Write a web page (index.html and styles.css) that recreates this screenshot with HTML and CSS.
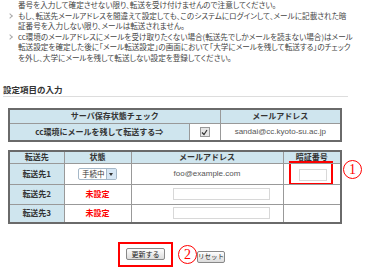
FILE: index.html
```html
<!DOCTYPE html>
<html lang="ja">
<head>
    <meta charset="UTF-8">
    <title>メール転送設定</title>
    <link rel="stylesheet" href="styles.css">
</head>
<body>
    <ul class="notes">
        <li class="cont">番号を入力して確定させない限り、転送を受け付けませんので注意してください。</li>
        <li>もし、転送先メールアドレスを間違えて設定しても、このシステムにログインして、メールに記載された暗<br>証番号を入力しない限り、メールは転送されません。</li>
        <li>cc環境のメールアドレスにメールを受け取りたくない場合(転送先でしかメールを読まない場合)はメール<br>転送設定を確定した後に「メール転送設定」の画面において「大学にメールを残して転送する」のチェック<br>を外し、大学にメールを残して転送しない設定を登録してください。</li>
    </ul>

    <h2 class="section-title">設定項目の入力</h2>

    <table class="grid server-table">
        <colgroup>
            <col class="w-label">
            <col class="w-check">
            <col class="w-mail">
        </colgroup>
        <tr class="head">
            <th colspan="2">サーバ保存状態チェック</th>
            <th>メールアドレス</th>
        </tr>
        <tr class="row-cc">
            <th class="label">cc環境にメールを残して転送する⇒</th>
            <td><span class="check"><svg width="7" height="7" viewBox="0 0 7 7"><path d="M1 3.5 L3 5.5 L6 1" fill="none" stroke="#333" stroke-width="1.2"/></svg></span></td>
            <td class="mail">sandai@cc.kyoto-su.ac.jp</td>
        </tr>
    </table>

    <div class="forward-wrap">
        <table class="grid forward-table">
            <colgroup>
                <col class="w-dest">
                <col class="w-state">
                <col class="w-addr">
                <col class="w-pin">
            </colgroup>
            <tr class="head">
                <th>転送先</th>
                <th>状態</th>
                <th>メールアドレス</th>
                <th>暗証番号</th>
            </tr>
            <tr class="r1">
                <th class="label">転送先1</th>
                <td><span class="select">手続中<span class="arrow"></span></span></td>
                <td class="mail">foo@example.com</td>
                <td class="pin-cell"><span class="mark-box"><span class="input pin"></span></span></td>
            </tr>
            <tr class="r2">
                <th class="label">転送先2</th>
                <td class="unset">未設定</td>
                <td><span class="input addr"></span></td>
                <td></td>
            </tr>
            <tr class="r3">
                <th class="label">転送先3</th>
                <td class="unset">未設定</td>
                <td><span class="input addr"></span></td>
                <td></td>
            </tr>
        </table>
        <span class="circle num1">1</span>
    </div>

    <div class="actions">
        <div class="mark-frame"><button class="btn">更新する</button></div>
        <span class="circle num2">2</span>
        <button class="btn reset">リセット</button>
    </div>
</body>
</html>
```

FILE: styles.css
```css
body {
    margin: 0;
    font-family: "Noto Sans CJK JP", sans-serif;
    font-size: 8px;
    color: #333;
    background-color: #fff;
}
.notes {
    list-style: none;
    margin: 0;
    padding: 0 0 0 18px;
    font-size: 7.6px;
    line-height: 10.5px;
    white-space: nowrap;
    font-feature-settings: "palt";
    color: #444;
}
.notes li {
    position: relative;
}
.notes li::before {
    content: "";
    position: absolute;
    left: -10px;
    top: 3px;
    width: 3px;
    height: 3px;
    border-top: 1px solid #aaa;
    border-right: 1px solid #aaa;
    transform: rotate(45deg);
}
.notes li.cont::before {
    display: none;
}
.section-title {
    margin: 20px 0 0 3px;
    width: 345px;
    font-size: 8.5px;
    line-height: 12px;
    padding-bottom: 1px;
    border-bottom: 1px solid #ddd;
    color: #333;
}
.grid {
    border-collapse: collapse;
    border: 2px solid #6a6a6a;
    margin-left: 8px;
    width: 332px;
    table-layout: fixed;
    flex: none;
}
.grid th,
.grid td {
    border: 1px solid #999;
    padding: 0;
    text-align: center;
    vertical-align: middle;
    font-size: 8px;
    line-height: 10px;
    white-space: nowrap;
}
.grid th {
    background-color: #cfe5ee;
    font-weight: bold;
    color: #333;
}
.server-table {
    margin-top: 11px;
}
.server-table .head {
    height: 14px;
}
.server-table .row-cc {
    height: 18px;
}
.w-label {
    width: 180px;
}
.w-check {
    width: 31px;
}
.w-mail {
    width: 121px;
}
.mail {
    font-family: "Liberation Sans", Arial, sans-serif;
    font-size: 7.5px;
    color: #555;
}
.check {
    display: inline-block;
    width: 8px;
    height: 8px;
    border: 1px solid #999;
    background-color: #e6e6e6;
    vertical-align: middle;
    line-height: 0;
}
.check svg {
    margin: 0.5px;
}
.forward-wrap {
    display: flex;
    align-items: flex-start;
    margin-top: 8px;
}
.forward-table .head {
    height: 12px;
}
.forward-table .r1 {
    height: 20px;
}
.forward-table .r2 {
    height: 20px;
}
.forward-table .r3 {
    height: 19px;
}
.w-dest {
    width: 55px;
}
.w-state {
    width: 67px;
}
.w-addr {
    width: 152px;
}
.w-pin {
    width: 58px;
}
.unset {
    color: #f00;
    font-weight: bold;
}
.select {
    display: inline-block;
    position: relative;
    width: 39px;
    height: 12px;
    border: 1px solid #a5b8c8;
    border-radius: 2px;
    background-color: #fff;
    text-align: left;
    padding-left: 3px;
    box-sizing: border-box;
    line-height: 10px;
    font-size: 7.5px;
    color: #333;
    vertical-align: middle;
}
.select .arrow {
    position: absolute;
    right: 0;
    top: 0;
    width: 9px;
    height: 10px;
    background-color: #d6e6f4;
    border-left: 1px solid #a5b8c8;
}
.select .arrow::after {
    content: "";
    position: absolute;
    left: 2px;
    top: 4px;
    border-left: 2.5px solid transparent;
    border-right: 2.5px solid transparent;
    border-top: 3px solid #333;
}
.input {
    display: inline-block;
    border: 1px solid #d8d8d8;
    background-color: #fff;
    vertical-align: middle;
    box-sizing: border-box;
}
.input.addr {
    width: 97px;
    height: 12px;
    margin-left: 28px;
}
.input.pin {
    display: block;
    width: 28px;
    height: 12px;
}
.pin-cell {
    text-align: left;
}
.mark-box {
    display: block;
    width: 44px;
    height: 24px;
    margin: -3px 0 -1px 5px;
    padding: 6px 0 0 8px;
    border: 2px solid #f00;
    box-sizing: border-box;
}
.circle {
    display: inline-flex;
    align-items: center;
    justify-content: center;
    flex: none;
    width: 19px;
    height: 19px;
    border: 1.5px solid #f00;
    border-radius: 50%;
    box-sizing: border-box;
    color: #f00;
    font-family: "Liberation Serif", serif;
    font-size: 14px;
    line-height: 1;
}
.num1 {
    margin: 10px 0 0 1px;
}
.actions {
    display: flex;
    align-items: center;
    margin-top: 18px;
    padding-left: 118px;
}
.mark-frame {
    border: 2px solid #f00;
    padding: 4px 6px 5px;
    line-height: 0;
}
.btn {
    display: inline-flex;
    align-items: center;
    justify-content: center;
    font-family: "Noto Sans CJK JP", sans-serif;
    font-size: 7px;
    line-height: 1;
    height: 12px;
    width: 39px;
    padding: 0;
    border: 1px solid #888;
    border-radius: 2px;
    background: linear-gradient(#fdfdfd, #dcdcdc);
    color: #222;
}
.num2 {
    margin-left: 5px;
}
.reset {
    width: 28px;
    font-size: 6.5px;
    margin-top: 4px;
}
```
